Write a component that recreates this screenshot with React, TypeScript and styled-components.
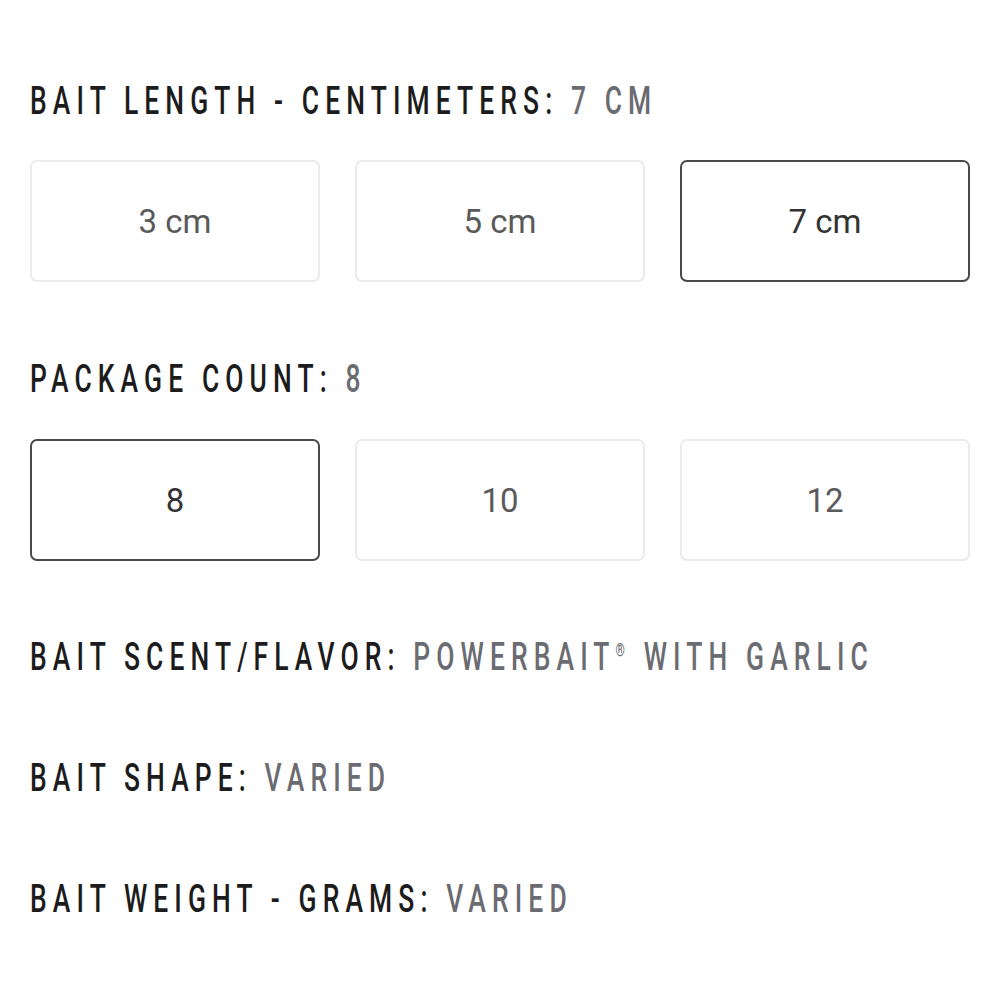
import React from "react";
import styled, { createGlobalStyle } from "styled-components";

const GlobalStyle = createGlobalStyle`
  body {
    margin: 0;
    background: #ffffff;
  }
`;

const Page = styled.div`
  width: 1000px;
  height: 1000px;
  box-sizing: border-box;
  padding: 81px 30px 0 30px;
  display: flex;
  flex-direction: column;
`;

const Heading = styled.div<{ $gap: number }>`
  height: 40px;
  display: flex;
  align-items: center;
  margin-bottom: ${(p) => p.$gap}px;
  white-space: nowrap;
`;

const HeadingText = styled.span`
  display: inline-block;
  font-family: "Roboto", "DejaVu Sans Condensed", sans-serif;
  font-weight: 500;
  font-size: 39px;
  letter-spacing: 9px;
  color: #1c1c1c;
  transform-origin: left center;
  transform: scaleX(0.678);
`;

const Value = styled.span`
  color: #6b6c72;
`;

const Reg = styled.span`
  font-size: 0.45em;
  vertical-align: 0.8em;
`;

const OptionGrid = styled.div<{ $gap: number }>`
  display: grid;
  grid-template-columns: repeat(3, 1fr);
  column-gap: 35px;
  margin-bottom: ${(p) => p.$gap}px;
`;

const Option = styled.button<{ $selected?: boolean }>`
  height: 122px;
  box-sizing: border-box;
  background: #ffffff;
  border: ${(p) => (p.$selected ? "2px solid #4a4a4a" : "2px solid #ebebeb")};
  border-radius: 7px;
  font-family: "Roboto", "Liberation Sans", sans-serif;
  font-size: 33px;
  font-weight: 400;
  color: ${(p) => (p.$selected ? "#333333" : "#5a5a5a")};
  cursor: pointer;
  padding: 0;
`;

type Attr = { label: string; value: React.ReactNode; gap: number };

const attrs: Attr[] = [
    {
        label: "BAIT SCENT/FLAVOR:",
        value: (
            <>
                POWERBAIT<Reg>®</Reg> WITH GARLIC
            </>
        ),
        gap: 81,
    },
    { label: "BAIT SHAPE:", value: "VARIED", gap: 81 },
    { label: "BAIT WEIGHT - GRAMS:", value: "VARIED", gap: 0 },
];

export default function App() {
    const lengths = ["3 cm", "5 cm", "7 cm"];
    const counts = ["8", "10", "12"];

    return (
        <Page>
            <GlobalStyle />
            <Heading $gap={39}>
                <HeadingText>
                    BAIT LENGTH - CENTIMETERS: <Value>7 CM</Value>
                </HeadingText>
            </Heading>
            <OptionGrid $gap={77}>
                {lengths.map((l) => (
                    <Option key={l} $selected={l === "7 cm"}>
                        {l}
                    </Option>
                ))}
            </OptionGrid>
            <Heading $gap={40}>
                <HeadingText>
                    PACKAGE COUNT: <Value>8</Value>
                </HeadingText>
            </Heading>
            <OptionGrid $gap={76}>
                {counts.map((c) => (
                    <Option key={c} $selected={c === "8"}>
                        {c}
                    </Option>
                ))}
            </OptionGrid>
            {attrs.map((a) => (
                <Heading key={a.label} $gap={a.gap}>
                    <HeadingText>
                        {a.label} <Value>{a.value}</Value>
                    </HeadingText>
                </Heading>
            ))}
        </Page>
    );
}
